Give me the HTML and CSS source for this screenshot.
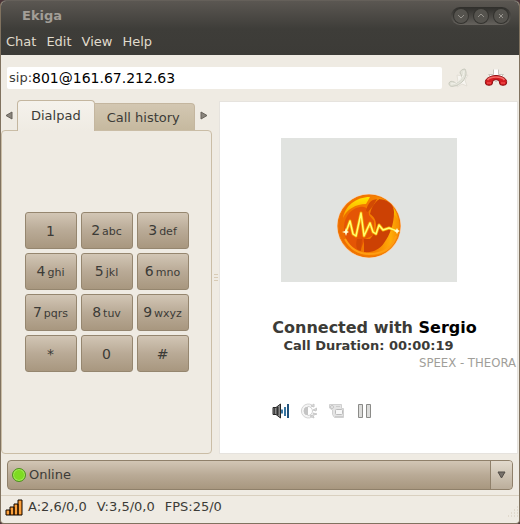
FILE: index.html
```html
<!DOCTYPE html>
<html lang="en">
<head>
<meta charset="utf-8">
<title>Ekiga</title>
<link rel="stylesheet" href="styles.css">
</head>
<body>
<div class="window">
  <header class="header">
    <div class="titlebar">
      <h1 class="title">Ekiga</h1>
      <div class="window-buttons">
        <button type="button" class="window-button" aria-label="Minimize"><svg viewBox="0 0 14 14"><path d="M4 6l3 3 3-3"/></svg></button>
        <button type="button" class="window-button" aria-label="Maximize"><svg viewBox="0 0 14 14"><path d="M4 8l3-3 3 3"/></svg></button>
        <button type="button" class="window-button" aria-label="Close"><svg viewBox="0 0 14 14"><path d="M5 5l4 4M9 5l-4 4"/></svg></button>
      </div>
    </div>
    <nav class="menubar">
      <button type="button">Chat</button>
      <button type="button">Edit</button>
      <button type="button">View</button>
      <button type="button">Help</button>
    </nav>
  </header>

  <div class="toolbar">
    <div class="address">
      <label for="uri">sip:</label>
      <input id="uri" type="text" value="801@161.67.212.63">
    </div>
    <button type="button" class="call-button" aria-label="Call" disabled>
      <svg width="22" height="22" viewBox="0 0 22 22">
        <path d="M9 8l5 1 6-1-3 5 2 6-5-2-5 3 1-5z" fill="#f7f5f0" stroke="#e4e0d7"/>
        <path d="M1 16c1-2 3-2 5-1l2 1c3-1 6-4 6-7l-2-3c0-2 2-4 5-4 2 4 1 8-2 12-3 3-6 5-9 5-3 1-5 0-5-3z" fill="#e3e3d9" stroke="#c8c9bd"/>
        <path d="M3 17c6 0 13-6 13-13" fill="none" stroke="#f4f3ec"/>
      </svg>
    </button>
    <button type="button" class="call-button" aria-label="Hang up">
      <svg width="24" height="20" viewBox="0 0 24 20">
        <path d="M9.500 1.500v5h-5L12 14l7.500-7.500h-5v-5" fill="#fff" stroke="#c9c6be"/>
        <path d="M2 16.500c-1-2-1-4 1-6 2-1.500 5-3 9-3s7 1.500 9 3c2 2 2 4 1 6-2 1-4 1-6 0l-1-4c-2-1-4-1-6 0l-1 4c-2 1-4 1-6 0z" fill="#d41c20" stroke="#8e1014"/>
        <path d="M3.500 12c3-4 14-4 17 0" fill="none" stroke="#f36c68" stroke-width="1.500"/>
        <path d="M3 15h4M17 15h4" stroke="#ee4a4a" stroke-width="1.500"/>
      </svg>
    </button>
  </div>

  <main class="main">
    <section class="side">
      <div class="tabs">
        <button type="button" class="tab-arrow" aria-label="Previous tab"><svg width="8" height="9" viewBox="0 0 8 9"><path d="M7 1v7L1 4.500z"/></svg></button>
        <button type="button" class="tab tab-active">Dialpad</button>
        <button type="button" class="tab">Call history</button>
        <button type="button" class="tab-arrow tab-arrow-next" aria-label="Next tab"><svg width="8" height="9" viewBox="0 0 8 9"><path d="M1 1v7l6-3.500z"/></svg></button>
      </div>
      <div class="panel">
        <div class="dialpad">
          <button type="button">1</button>
          <button type="button">2<small>abc</small></button>
          <button type="button">3<small>def</small></button>
          <button type="button">4<small>ghi</small></button>
          <button type="button">5<small>jkl</small></button>
          <button type="button">6<small>mno</small></button>
          <button type="button">7<small>pqrs</small></button>
          <button type="button">8<small>tuv</small></button>
          <button type="button">9<small>wxyz</small></button>
          <button type="button">*</button>
          <button type="button">0</button>
          <button type="button">#</button>
        </div>
      </div>
    </section>
    <div class="splitter"><i></i><i></i><i></i></div>
    <section class="call">
      <div class="video">
        <svg width="66" height="66" viewBox="0 0 66 66" role="img" aria-label="Ekiga">
          <defs>
            <linearGradient id="ball" x1="0" y1="0" x2="1" y2="0">
              <stop offset="0" stop-color="#ec6a00"/>
              <stop offset="0.600" stop-color="#f58000"/>
              <stop offset="0.850" stop-color="#ffac08"/>
              <stop offset="1" stop-color="#f58a00"/>
            </linearGradient>
            <linearGradient id="shine" x1="0" y1="0" x2="0" y2="1">
              <stop offset="0" stop-color="#ffe600"/>
              <stop offset="1" stop-color="#fb9a00"/>
            </linearGradient>
          </defs>
          <circle cx="33" cy="33" r="32" fill="#ffc590"/>
          <circle cx="33" cy="33" r="31" fill="url(#ball)" stroke="#ee7400"/>
          <path d="M8 38c-1-12 5-22 16-24 7-1 9 3 9 8l5 6v14l-9 4-5 12C15 55 9 48 8 38z" fill="#e45505"/>
          <path d="M7 25C9 13 20 4 34 4l-4 7C20 11 11 16 7 25z" fill="url(#shine)"/>
          <path d="M42 6c11 2 18 8 20 21-4-7-11-12-18-13z" fill="url(#shine)"/>
          <path d="M37 7l4-1-4 7-5 6-2-1c1-5 3-9 7-11z" fill="#d24a04"/>
          <path d="M43 6c9 1 15 5 15 13 0 12-4 23-10 31-4 6-11 10-20 9V46h6c4-4 6-9 6-14 0-6-3-9-6-11 1-6 4-11 9-15z" fill="#cc4104"/>
          <path d="M21 46h5l-1 12-4-2c-1-3-1-7 0-10z" fill="#d24a04"/>
          <path d="M9 46c5 9 13 15 24 15 13 0 23-6 27-18" fill="none" stroke="#ff9d12" stroke-width="2"/>
          <path d="M10 39l4-11 3 13 3 2 5-23 3 23 6-13 3 9 3 2 3-9 4 5 6-2 8 3" fill="none" stroke="#f7a000" stroke-width="3" stroke-linejoin="round"/>
          <path d="M10 39l4-11 3 13 3 2 5-23 3 23 6-13 3 9 3 2 3-9 4 5 6-2 8 3" fill="none" stroke="#ffff70" stroke-width="1.500" stroke-linejoin="round"/>
          <path d="M10 35l1 3 2 1-2 1-1 3-1-3-3-1 3-1zM61 35l1 2 2 1-2 1-1 2-1-2-2-1 2-1z" fill="#ffffd8"/>
        </svg>
      </div>
      <div class="call-info">
        <h2 class="peer">Connected with <b>Sergio</b></h2>
        <p class="duration">Call Duration: 00:00:19</p>
        <p class="codecs">SPEEX - THEORA</p>
      </div>
      <div class="call-tools">
        <button type="button" aria-label="Volume">
          <svg width="17" height="16" viewBox="0 0 17 16">
            <path d="M1 4.500h3L8.500 1v14L4 11.500H1z" fill="#8a8a8a" stroke="#292929"/>
            <path d="M5.500 4v8" stroke="#333" stroke-width="2"/>
            <path d="M2.500 5v6" stroke="#444"/>
            <path d="M10 6.500v4" stroke="#3774a0" stroke-width="2"/>
            <path d="M13 4v9" stroke="#3774a0" stroke-width="2"/>
            <path d="M16 1v14" stroke="#20537d" stroke-width="2"/>
          </svg>
        </button>
        <button type="button" aria-label="Video settings" disabled>
          <svg width="17" height="16" viewBox="0 0 17 16">
            <path d="M12 2a7 7 0 1 0 0 12" fill="#f4f4f4" stroke="#d4d4d4"/>
            <path d="M8 4a4 4 0 0 0 0 8z" fill="#c4c4c4" stroke="#c4c4c4"/>
            <path d="M8 3.500a4.500 4.500 0 0 1 0 9" fill="#fff" stroke="#d0d0d0"/>
            <path d="M11 3l3-2v3zM13 7l4-2-1 3zM13 10l4 1-3 1zM10 13l4 2-1-3z" fill="#ddd" stroke="#c8c8c8"/>
          </svg>
        </button>
        <button type="button" aria-label="Video stream" disabled>
          <svg width="17" height="16" viewBox="0 0 17 16">
            <path d="M1.500 1.500h12v4h2v9h-9l-2-3V7l-3-2z" fill="#e4e4e4" stroke="#d0d0d0"/>
            <circle cx="4" cy="4" r="1.500" fill="#eee" stroke="#c3c3c3"/>
            <rect x="7.500" y="6.500" width="7" height="5" rx="1" fill="#f7f7f7" stroke="#bbb"/>
            <path d="M7 13.500h8M8 3.500h4" stroke="#ccc"/>
          </svg>
        </button>
        <button type="button" aria-label="Hold">
          <svg width="17" height="16" viewBox="0 0 17 16">
            <path d="M2.500 1.500h4v13h-4zM10.500 1.500h4v13h-4z" fill="#dcdcda" stroke="#8b8b88"/>
          </svg>
        </button>
      </div>
    </section>
  </main>

  <div class="presence">
    <span class="presence-dot"></span>
    <select aria-label="Status"><option>Online</option></select>
    <span class="presence-arrow"><svg width="9" height="8" viewBox="0 0 9 8"><path d="M1 1h7L4.500 7z" fill="#77716a" stroke="#514c46"/></svg></span>
  </div>

  <footer class="statusbar">
    <svg width="18" height="17" viewBox="0 0 18 17" aria-hidden="true">
      <path d="M1 11h4v5H1zM5 8h4v8H5zM9 5h4v11H9zM13 1h4v15h-4z" fill="#f58a20" stroke="#100800"/>
      <path d="M3 12v3M7 9v6M11 6v9M15 2v13" stroke="#ffb85c"/>
    </svg>
    <span>A:2,6/0,0</span>
    <span>V:3,5/0,0</span>
    <span>FPS:25/0</span>
    <svg class="grip" width="12" height="12" viewBox="0 0 12 12" aria-hidden="true"><path d="M10 1h1M7 4h1M10 4h1M4 7h1M7 7h1M10 7h1M1 10h1M4 10h1M7 10h1M10 10h1" stroke="#d3c9b8"/></svg>
  </footer>
</div>
</body>
</html>
```

FILE: styles.css
```css
* {
  box-sizing: border-box;
}

body {
  margin: 0;
  background: #4b3438;
  color: #3c3b37;
  font: 13px/16px "DejaVu Sans", sans-serif;
}

button,
input,
select {
  margin: 0;
  padding: 0;
  border: 0;
  background: none;
  color: inherit;
  font: inherit;
}

svg {
  display: block;
}

.window {
  display: flex;
  flex-direction: column;
  min-height: 100vh;
  border: 1px solid #80725f;
  border-top-color: #65605a;
  border-radius: 6px 6px 4px 4px;
  background: #efebe3;
  overflow: hidden;
}

.header {
  background: linear-gradient(#5b5752, #3e3d39 28px, #3c3b37);
}

.titlebar {
  display: flex;
  align-items: center;
  justify-content: space-between;
  height: 29px;
  padding: 0 8px 0 21px;
}

.title {
  margin: 0;
  color: #a29e97;
  font-size: 13px;
  line-height: 16px;
}

.window-buttons {
  display: flex;
  gap: 6px;
  padding: 2px 3px;
  border-radius: 10px;
  background: linear-gradient(#2f2e2b, #65625d);
}

.window-button {
  width: 14px;
  height: 14px;
  border-radius: 50%;
  background: #55534e;
  box-shadow: 0 0 0 1px #34332f;
}

.window-button svg {
  fill: none;
  stroke: #96938d;
}

.menubar {
  display: flex;
  gap: 10px;
  height: 25px;
  padding: 0 5px;
  color: #e0dbcd;
}

.menubar button {
  height: 24px;
}

.toolbar {
  display: flex;
  align-items: center;
  gap: 14px;
  height: 45px;
  padding: 0 11px 0 6px;
}

.address {
  display: flex;
  flex: 1;
  align-items: center;
  height: 22px;
  margin-right: -8px;
  padding: 0 2px;
  border-radius: 2px;
  background: #fff;
}

.address input {
  flex: 1;
  min-width: 0;
  color: #000;
  font-size: 14px;
}

.main {
  display: flex;
  flex: 1;
}

.side {
  display: flex;
  flex: 0 0 211px;
  flex-direction: column;
}

.tabs {
  display: flex;
  align-items: flex-end;
  height: 30px;
}

.tab-arrow {
  display: flex;
  align-items: center;
  justify-content: center;
  width: 16px;
  height: 30px;
}

.tab-arrow svg {
  fill: #8a857d;
  stroke: #66615a;
}

.tab-arrow-next {
  margin-left: auto;
}

.tab {
  height: 27px;
  padding: 2px 14px 0 12px;
  border: 1px solid #c4b69f;
  border-bottom-width: 0;
  border-left: 0;
  border-radius: 0 4px 0 0;
  background: linear-gradient(#d3c7b2, #c6b99f);
}

.tab-active {
  z-index: 1;
  height: 31px;
  margin-bottom: -1px;
  padding: 0 13px;
  border-left: 1px solid #c4b69f;
  border-radius: 4px 4px 0 0;
  background: linear-gradient(#f5f2ec, #efebe3);
}

.panel {
  display: flex;
  flex: 1;
  align-items: center;
  justify-content: center;
  border: 1px solid #cabda6;
  border-radius: 4px;
}

.dialpad {
  display: grid;
  grid-template-columns: repeat(3, 52px);
  gap: 4px;
}

.dialpad button {
  height: 37px;
  border: 1px solid #95866f;
  border-radius: 3px;
  background: linear-gradient(#d2c6b5, #b9aa96 50%, #a8977f);
  font-size: 14px;
}

.dialpad small {
  margin-left: 2px;
  font-size: 11px;
}

.splitter {
  display: flex;
  flex: 0 0 7px;
  flex-direction: column;
  align-items: center;
  justify-content: center;
  gap: 2px;
}

.splitter i {
  width: 4px;
  height: 1px;
  background: #d8cbb5;
}

.call {
  display: flex;
  flex: 1;
  flex-direction: column;
  align-items: center;
  min-width: 0;
  margin: 1px 1px 0 0;
  padding-top: 36px;
  border: 1px solid #e6e3de;
  background: #fff;
}

.video {
  display: flex;
  align-items: center;
  justify-content: center;
  width: 176px;
  height: 144px;
  padding-top: 32px;
  background: #e1e3e0;
}

.call-info {
  align-self: stretch;
  margin-top: 36px;
  padding: 0 1px;
  text-align: center;
}

.peer {
  margin: 0;
  padding-left: 12px;
  font-size: 16px;
  line-height: 20px;
}

.peer b {
  color: #000;
}

.duration {
  margin: 0;
  font-weight: bold;
  line-height: 16px;
}

.codecs {
  margin: 0;
  color: #a09e99;
  font-family: "DejaVu Sans Condensed", "DejaVu Sans", sans-serif;
  line-height: 18px;
  text-align: right;
}

.call-tools {
  display: flex;
  align-self: flex-start;
  gap: 11px;
  margin-top: 31px;
  padding-left: 52px;
}

.presence {
  display: flex;
  align-items: center;
  height: 30px;
  margin: 6px 6px 5px;
  padding-left: 4px;
  border: 1px solid #8f806a;
  border-radius: 4px;
  background: linear-gradient(#d2c6b5, #b9aa96 50%, #a8977f);
}

.presence-dot {
  width: 14px;
  height: 14px;
  margin-right: 3px;
  border: 1px solid #4f8d21;
  border-radius: 50%;
  background: #7edb22;
  box-shadow: inset 0 0 0 1px #a5ec5a;
}

.presence select {
  flex: 1;
  height: 28px;
  appearance: none;
}

.presence-arrow {
  display: flex;
  align-items: center;
  justify-content: center;
  width: 22px;
  height: 28px;
  border-left: 1px solid #8f806a;
  border-radius: 0 3px 3px 0;
  background: linear-gradient(#e2dacd, #bbae9b);
}

.statusbar {
  display: flex;
  align-items: center;
  gap: 10px;
  height: 28px;
  padding: 0 0 5px 4px;
  border-top: 1px solid #d9d0c0;
}

.statusbar svg:first-child {
  margin-right: -5px;
}

.grip {
  align-self: flex-end;
  margin-left: auto;
}
```
